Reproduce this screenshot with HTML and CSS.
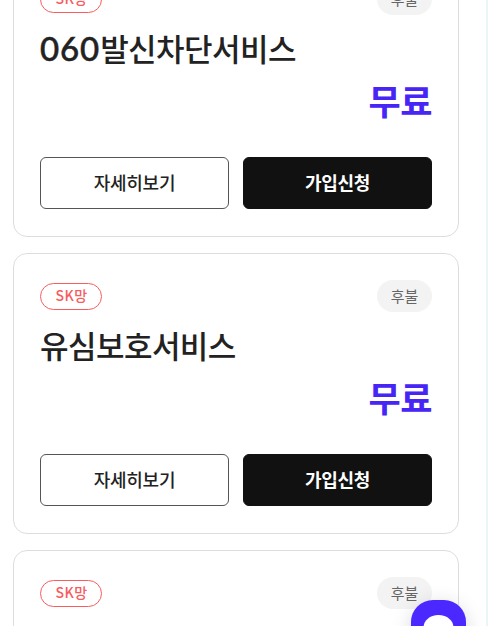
FILE: index.html
```html
<!DOCTYPE html>
<html lang="ko">
<head>
    <meta charset="UTF-8">
    <meta name="viewport" content="width=device-width, initial-scale=1.0">
    <title>부가서비스</title>
    <link rel="stylesheet" href="styles.css">
</head>
<body>
    <div class="list">
        <div class="card">
            <div class="card-top">
                <span class="network">SK망</span>
                <span class="pay">후불</span>
            </div>
            <h2 class="name"><span class="num">060</span>발신차단서비스</h2>
            <p class="price">무료</p>
            <div class="buttons">
                <button type="button" class="btn detail">자세히보기</button>
                <button type="button" class="btn join">가입신청</button>
            </div>
        </div>
        <div class="card">
            <div class="card-top">
                <span class="network">SK망</span>
                <span class="pay">후불</span>
            </div>
            <h2 class="name">유심보호서비스</h2>
            <p class="price">무료</p>
            <div class="buttons">
                <button type="button" class="btn detail">자세히보기</button>
                <button type="button" class="btn join">가입신청</button>
            </div>
        </div>
        <div class="card">
            <div class="card-top">
                <span class="network">SK망</span>
                <span class="pay">후불</span>
            </div>
        </div>
    </div>
    <!-- chat button -->
    <button type="button" class="chat" aria-label="채팅 상담">
        <svg width="55" height="55" viewBox="0 0 55 55">
            <path d="M27.5 15C19 15 12.500 20.500 12.500 27.500S19 40 27.500 40S42.500 34.500 42.500 27.500S36 15 27.500 15Z" fill="#fff"/>
        </svg>
    </button>
</body>
</html>
```
FILE: styles.css
```css
*{
    box-sizing: border-box;
}
body{
    margin: 0;
    height: 626px;
    overflow: hidden;
    background-color: #fff;
    border-right: 2px solid #e8f6fa;
    font-family: "Noto Sans CJK KR", sans-serif;
    color: #222;
}
.list{
    display: flex;
    flex-direction: column;
    gap: 16px;
    width: 446px;
    /* list is scrolled, first card starts above the window */
    margin: -44px 0 0 13px;
}
.card{
    flex: none;
    height: 281px;
    padding: 26px;
    border: 1px solid #ddd;
    border-radius: 14px;
}
.card-top{
    display: flex;
    justify-content: space-between;
    align-items: center;
    height: 32px;
}
.network{
    width: 62px;
    height: 27px;
    margin-top: 1px;
    border: 1px solid #f75c5f;
    border-radius: 14px;
    color: #f75c5f;
    font-size: 14px;
    font-weight: 500;
    line-height: 23px;
    letter-spacing: 0.5px;
    text-indent: 1px;
    text-align: center;
}
.pay{
    width: 55px;
    height: 32px;
    border-radius: 16px;
    background-color: #f3f3f3;
    color: #666;
    font-size: 15px;
    line-height: 31px;
    text-align: center;
}
.name{
    margin: 9px 0 0;
    height: 48px;
    font-size: 31px;
    font-weight: 500;
    line-height: 48px;
    letter-spacing: -0.55px;
    white-space: nowrap;
}
.num{
    font-family: Lato, sans-serif;
    font-size: 33px;
    letter-spacing: 0.9px;
    -webkit-text-stroke: 0.5px #222;
}
.price{
    margin: 0;
    height: 56px;
    color: #4625f5;
    font-size: 35px;
    font-weight: 700;
    line-height: 56px;
    letter-spacing: -0.5px;
    text-align: right;
}
.buttons{
    display: flex;
    gap: 14px;
    margin-top: 29px;
}
.btn{
    flex: 1;
    height: 52px;
    padding: 0 0 3px;
    border: 1px solid #555;
    border-radius: 6px;
    background-color: #fff;
    color: #222;
    font-family: inherit;
    font-size: 18px;
    font-weight: 500;
    letter-spacing: -0.3px;
}
.join{
    border-color: #111;
    background-color: #111;
    color: #fff;
    font-weight: 700;
}
.chat{
    position: fixed;
    left: 411px;
    top: 600px;
    width: 55px;
    height: 55px;
    padding: 0;
    border: 0;
    border-radius: 22px;
    background-color: #4b28ff;
    box-shadow: 0 4px 20px rgba(0, 0, 0, 0.15);
}
.chat svg{
    display: block;
}
```
